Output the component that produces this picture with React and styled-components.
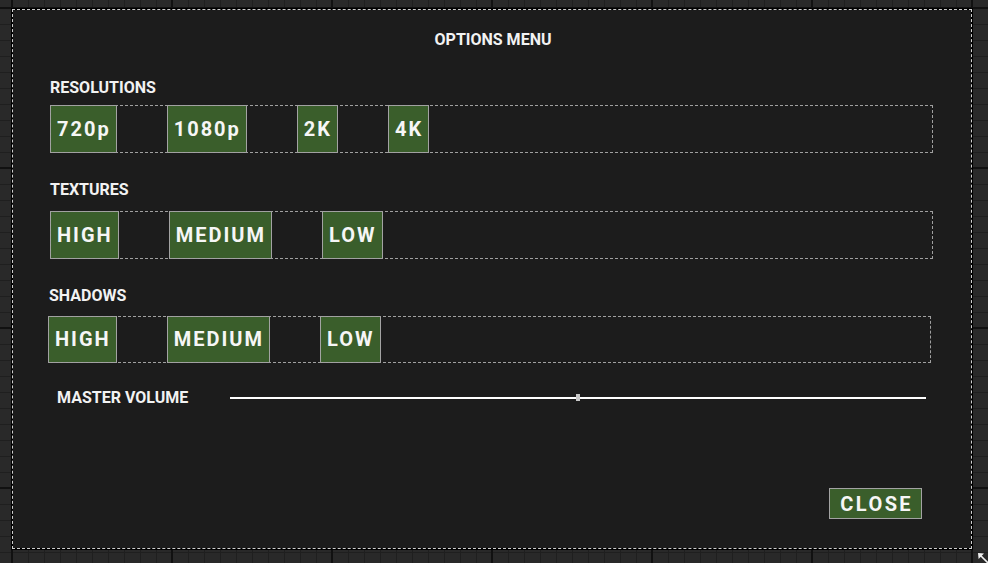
import styled, { createGlobalStyle } from 'styled-components'

const GlobalStyle = createGlobalStyle`
  html, body {
    margin: 0;
    height: 100%;
  }
  body {
    font-family: Roboto, "Liberation Sans", sans-serif;
    background-color: #292929;
    background-image:
      linear-gradient(90deg, #111111 2px, transparent 2px),
      linear-gradient(#111111 2px, transparent 2px),
      linear-gradient(90deg, #1f1f1f 1px, transparent 1px),
      linear-gradient(#1f1f1f 1px, transparent 1px);
    background-size: 160px 160px, 160px 160px, 16px 16px, 16px 16px;
    background-position: 11px 7px, 11px 7px, 12px 8px, 12px 8px;
    overflow: hidden;
  }
`

const Stage = styled.div`
  padding: 8px 0 0 11px;
`

const Frame = styled.div`
  position: relative;
  display: inline-block;
  padding: 1px;
  background: #000;
`

const Panel = styled.div`
  box-sizing: border-box;
  width: 960px;
  height: 540px;
  border: 1px dashed #cfcfcf;
  background: #1c1c1c;
  background-clip: padding-box;
  display: flex;
  flex-direction: column;
  padding-top: 20px;
  color: #f2f2f2;
`

const Title = styled.h1`
  margin: 0;
  font-size: 16px;
  line-height: 20px;
  font-weight: 700;
  text-align: center;
  padding-left: 2px;
`

const Section = styled.section`
  margin-top: ${({ $top }) => $top}px;
  padding: 0 ${({ $shift }) => 38 + $shift}px 0 ${({ $shift }) => 37 - $shift}px;
`

const Label = styled.div`
  font-size: 16px;
  line-height: 20px;
  font-weight: 700;
  padding-left: ${({ $indent }) => $indent || 0}px;
`

const Row = styled.div`
  position: relative;
  box-sizing: border-box;
  height: ${({ $h }) => $h}px;
  margin-top: ${({ $gap }) => $gap}px;
  display: flex;
  gap: 50px;

  &::after {
    content: '';
    position: absolute;
    inset: 0;
    border: 1px dashed #a0a0a0;
    pointer-events: none;
  }
`

const OptionButton = styled.button`
  box-sizing: border-box;
  height: 100%;
  padding: 0 5px 1px 6px;
  background: #3a5e2b;
  border: 1px solid #a3a3a3;
  color: #f6f6f6;
  font-family: Roboto, "Liberation Sans", sans-serif;
  font-size: 20px;
  font-weight: 700;
  letter-spacing: 2px;
  cursor: pointer;
`

const VolumeRow = styled.div`
  margin-top: 25px;
  height: 20px;
  display: flex;
  align-items: center;
  padding: 0 45px 0 44px;
`

const VolumeLabel = styled.div`
  width: 173px;
  font-size: 16px;
  line-height: 20px;
  font-weight: 700;
`

const Track = styled.div`
  position: relative;
  flex: 1;
  height: 2px;
  background: #ffffff;
`

const Thumb = styled.div`
  position: absolute;
  top: -3px;
  width: 4px;
  height: 7px;
  margin-left: -2px;
  background: #c8c8c8;
`

const Footer = styled.div`
  margin-top: auto;
  margin-bottom: 29px;
  display: flex;
  justify-content: flex-end;
  padding-right: 49px;
`

const CloseButton = styled.button`
  box-sizing: border-box;
  height: 31px;
  padding: 0 8px 0 10px;
  background: #3a5e2b;
  border: 1px solid #a3a3a3;
  color: #f6f6f6;
  font-family: Roboto, "Liberation Sans", sans-serif;
  font-size: 20px;
  font-weight: 700;
  letter-spacing: 2.4px;
  cursor: pointer;
`

const ResizeHandle = styled.svg`
  position: absolute;
  right: -16px;
  bottom: -14px;
`

const sections = [
  { label: 'RESOLUTIONS', top: 28, gap: 7, h: 48, shift: 0, options: ['720p', '1080p', '2K', '4K'] },
  { label: 'TEXTURES', top: 27, gap: 11, h: 48, shift: 0, options: ['HIGH', 'MEDIUM', 'LOW'] },
  { label: 'SHADOWS', top: 27, gap: 10, h: 47, shift: 2, options: ['HIGH', 'MEDIUM', 'LOW'] },
]

export default function App() {
  const volume = 0.5

  return (
    <>
      <GlobalStyle />
      <Stage>
        <Frame>
          <Panel>
            <Title>OPTIONS MENU</Title>

            {sections.map((s) => (
              <Section key={s.label} $top={s.top} $shift={s.shift}>
                <Label $indent={s.shift ? 1 : 0}>{s.label}</Label>
                <Row $gap={s.gap} $h={s.h}>
                  {s.options.map((opt) => (
                    <OptionButton key={opt}>{opt}</OptionButton>
                  ))}
                </Row>
              </Section>
            ))}

            <VolumeRow>
              <VolumeLabel>MASTER VOLUME</VolumeLabel>
              <Track>
                <Thumb style={{ left: `${volume * 100}%` }} />
              </Track>
            </VolumeRow>

            <Footer>
              <CloseButton>CLOSE</CloseButton>
            </Footer>
          </Panel>

          {/* corner resize arrow */}
          <ResizeHandle width="12" height="12" viewBox="0 0 12 12">
            <path d="M11 11 L3 3" stroke="#f0f0f0" strokeWidth="1.6" />
            <path d="M1 1 L7 1.6 L1.6 7 Z" fill="#f0f0f0" />
          </ResizeHandle>
        </Frame>
      </Stage>
    </>
  )
}
